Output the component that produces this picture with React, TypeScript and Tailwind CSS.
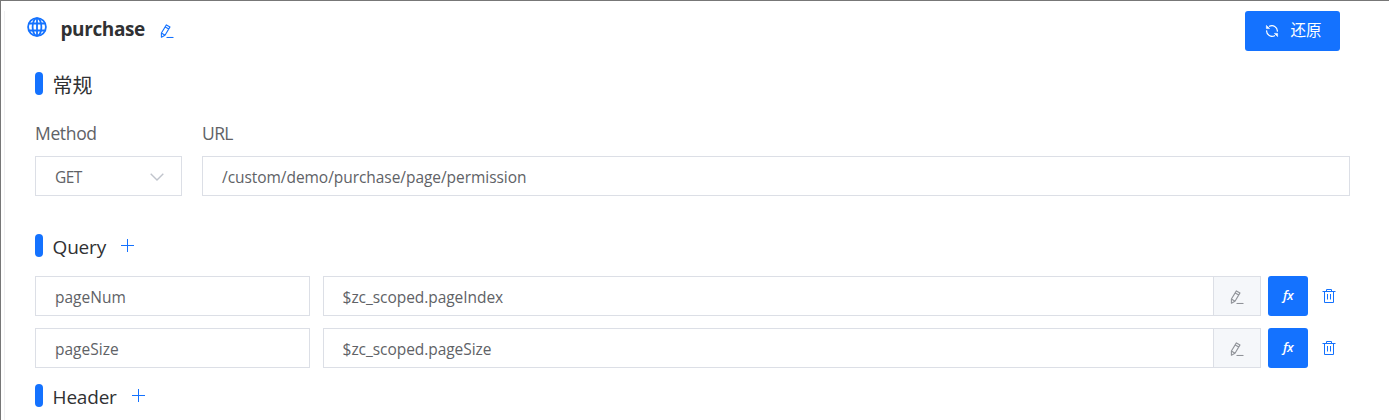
import type { ReactNode } from "react"

interface Param {
  name: string
  value: string
}

const query: Param[] = [
  { name: "pageNum", value: "$zc_scoped.pageIndex" },
  { name: "pageSize", value: "$zc_scoped.pageSize" },
]

function GlobeIcon() {
  return (
    <svg width="20" height="20" viewBox="0 0 20 20" fill="none" stroke="#1472ff" strokeWidth="1.8">
      <circle cx="10" cy="10" r="8.9" />
      <ellipse cx="10" cy="10" rx="4.4" ry="8.9" />
      <path d="M10 1v18M1.9 6.5h16.2M1.9 13.5h16.2" />
    </svg>
  )
}

function EditIcon({ className }: { className?: string }) {
  return (
    <svg width="14" height="14" viewBox="0 0 14 14" fill="none" stroke="currentColor" strokeWidth="1.1" className={className}>
      <path d="M1.4 9L6.4 .9l3.6 2-5 8.3-3.6 2zM5.2 2.9l3.6 2M1.4 9l3.6 2.2" strokeLinejoin="round" />
      <path d="M6.5 13.5h7" />
    </svg>
  )
}

function RefreshIcon() {
  return (
    <svg width="14" height="14" viewBox="0 0 14 14" fill="none" stroke="#fff" strokeWidth="1.2">
      <path d="M4 2.6A5.3 5.3 0 0 1 12.3 7.6M10 11.4A5.3 5.3 0 0 1 1.7 6.4" />
      <path d="M1.4 1.4v3.2h3.2zM12.6 12.6V9.4H9.4z" fill="#fff" strokeWidth=".6" />
    </svg>
  )
}

function PlusIcon() {
  return (
    <svg width="13" height="13" viewBox="0 0 13 13" stroke="#1472ff" strokeWidth="1">
      <path d="M6.5 0v13M0 6.5h13" />
    </svg>
  )
}

function TrashIcon() {
  return (
    <svg width="14" height="14" viewBox="0 0 14 14" fill="none" stroke="#1472ff" strokeWidth="1">
      <path d="M.5 2.5h13M4.5 2.5v-2h5v2M2.5 2.5v11h9v-11M5.5 5v5.5M8.5 5v5.5" />
    </svg>
  )
}

function SectionTitle({ title, className, children }: { title: string; className: string; children?: ReactNode }) {
  return (
    <div className={`flex h-[23px] items-center ${className}`}>
      <span className="h-full w-2 rounded-[4px] bg-[#1472ff]" />
      <h2 className="ml-[9.6px] pt-[3px] leading-[24px] text-[#303133]">{title}</h2>
      {children}
    </div>
  )
}

export default function App() {
  return (
    <div className="h-[420px] w-[1389px] overflow-hidden border-t border-l border-[#777777] bg-white pl-[3px] pt-[10px] font-['Open_Sans','Noto_Sans_CJK_SC',sans-serif] text-[#606266]">
      <div className="h-[420px] border-l border-[#f0f0f2] pl-[30px]">
        <header className="flex h-10 items-start justify-between pr-[49px]">
          <div className="-ml-[8.5px] flex items-start pt-[6px]">
            <GlobeIcon />
            <h1 className="ml-[14px] text-[19px] leading-[24px] font-bold tracking-[-0.4px] text-[#303133]">purchase</h1>
            <EditIcon className="mt-[7px] ml-[15px] text-[#1472ff]" />
          </div>
          <button className="flex h-10 w-[95px] items-center justify-center gap-[11px] rounded-[3px] bg-[#1472ff] pl-[2px] text-[15.5px] text-white">
            <RefreshIcon />
            <span>还原</span>
          </button>
        </header>

        <SectionTitle title="常规" className="mt-[21px] text-[20px] [&>h2]:pt-[5px]" />

        <div className="mt-[26px] flex gap-5 text-[17.5px] leading-[24px]">
          <div className="w-[147px]">
            <label className="tracking-[-0.35px]">Method</label>
            <div className="mt-[11px] flex h-10 items-center justify-between border border-[#dcdfe6] pr-[17px] pl-[19px] text-[15.5px]">
              <span className="pt-[2px] tracking-[-0.6px]">GET</span>
              <svg width="14" height="8" viewBox="0 0 14 8" fill="none" stroke="#c0c4cc" strokeWidth="1.4" className="mt-[2px]">
                <path d="M.7.7L7 7l6.3-6.3" />
              </svg>
            </div>
          </div>
          <div className="w-[1148px]">
            <label className="tracking-[-0.6px]">URL</label>
            <div className="mt-[11px] flex h-10 items-center border border-[#dcdfe6] pl-[19px] text-[15.5px]">
              <span className="pt-[2px] tracking-[-0.05px]">/custom/demo/purchase/page/permission</span>
            </div>
          </div>
        </div>

        <SectionTitle title="Query" className="mt-[38px] text-[19px] tracking-[-0.2px]">
          <span className="ml-[15px]"><PlusIcon /></span>
        </SectionTitle>

        <div className="mt-[19px] flex flex-col gap-3 text-[15.5px]">
          {query.map((param) => (
            <div key={param.name} className="flex h-10 items-center">
              <div className="flex h-10 w-[275px] items-center border border-[#dcdfe6] pl-[19px]">
                <span className="pt-[3px]">{param.name}</span>
              </div>
              <div className="ml-[13px] flex h-10 w-[938px] border border-[#dcdfe6]">
                <div className="flex flex-1 items-center pl-[18.6px]">
                  <span className="pt-[3px] tracking-[-0.05px]">{param.value}</span>
                </div>
                <div className="flex w-[47px] items-center justify-center border-l border-[#dcdfe6] bg-[#f5f7fa] pt-[2px] text-[#909399]">
                  <EditIcon />
                </div>
              </div>
              <button className="ml-[7px] h-10 w-10 rounded-[3px] bg-[#1472ff] pb-px text-[13px] font-semibold tracking-[-0.5px] text-white italic">
                fx
              </button>
              <span className="ml-[14px]"><TrashIcon /></span>
            </div>
          ))}
        </div>

        <SectionTitle title="Header" className="mt-4 text-[19px] tracking-[-0.2px]">
          <span className="ml-[15px]"><PlusIcon /></span>
        </SectionTitle>
      </div>
    </div>
  )
}
